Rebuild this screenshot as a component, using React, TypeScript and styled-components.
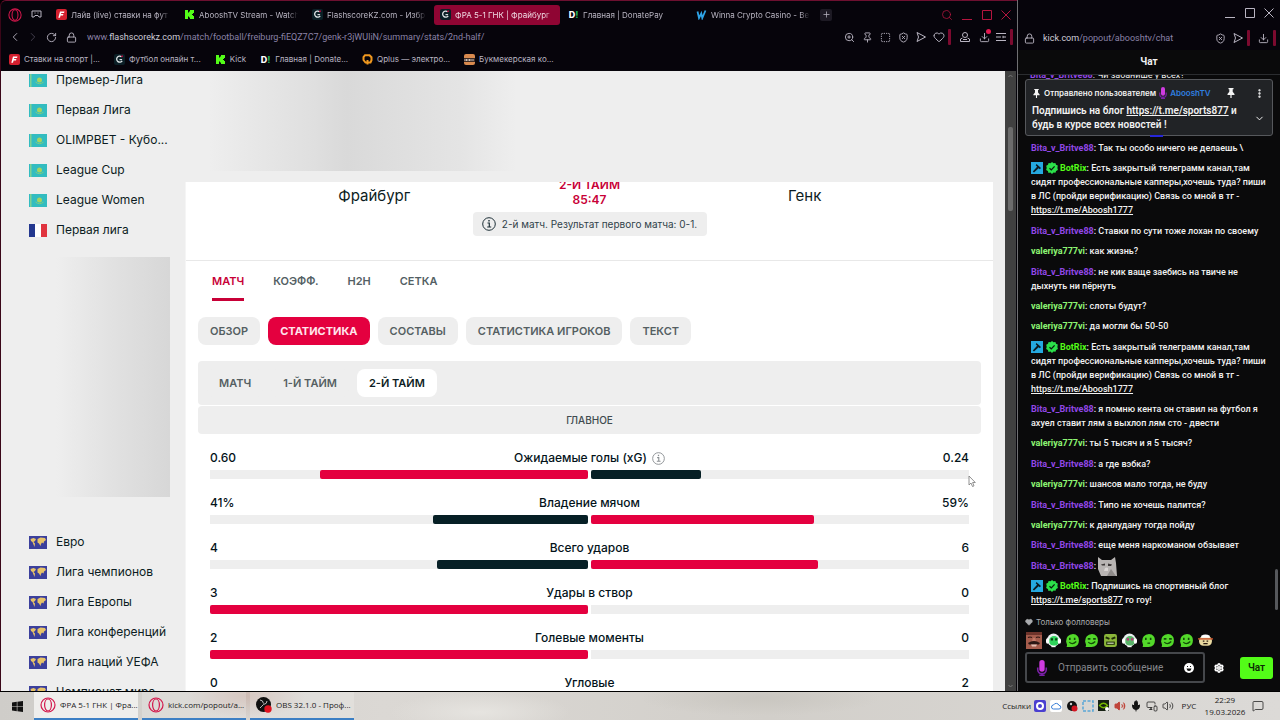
import React from 'react';
import styled, { createGlobalStyle, css } from 'styled-components';
import {
  ChevronLeft, ChevronRight, ChevronDown, RotateCw, Lock, ZoomIn, Pin, SquareDashed, ShieldX,
  Heart, Download, Search, Plus, MoreVertical, Settings, Mic, Volume2, MessageSquare, MonitorSmartphone,
} from 'lucide-react';

const Global = createGlobalStyle`
  * { box-sizing: border-box; }
  body { margin: 0; background: #000; font-family: Inter, "Liberation Sans", sans-serif; }
  button { font: inherit; border: 0; padding: 0; background: none; color: inherit; cursor: pointer; }
  a { color: inherit; text-decoration: none; }
  ul { list-style: none; margin: 0; padding: 0; }
  svg { display: block; flex: none; }
`;

const Desktop = styled.div`
  display: flex;
  flex-direction: column;
  height: 100vh;
  overflow: hidden;
  background: #000;
`;
const Windows = styled.div`
  flex: 1;
  min-height: 0;
  display: flex;
  border-bottom: 1px solid #000;
`;

/* ---------- browser window ---------- */
const Browser = styled.section`
  flex: 1;
  min-width: 0;
  display: flex;
  flex-direction: column;
  background: #06040b;
  border-left: 1px solid #3a0618;
  border-top: 1px solid #6d1030;
  border-top-left-radius: 6px;
  color: #b9b5c2;
`;
const TabBar = styled.div`
  display: flex;
  align-items: center;
  height: 25px;
  padding: 2px 2px 0 7px;
`;
const IconButton = styled.button<{ $w?: number; $color?: string }>`
  flex: none;
  display: flex;
  align-items: center;
  justify-content: center;
  position: relative;
  width: ${(p) => p.$w ?? 18}px;
  height: 20px;
  color: ${(p) => p.$color ?? '#b9b5c2'};
`;
const Tab = styled.button<{ $active?: boolean }>`
  flex: 0 1 126px;
  min-width: 0;
  display: flex;
  align-items: center;
  gap: 4px;
  height: 20px;
  margin-right: 2px;
  padding: 0 6px;
  border-radius: 3px;
  font-size: 8px;
  line-height: 14px;
  ${(p) => p.$active && css`background: #8f0533; color: #f0dbe4;`}
`;
const TabTitle = styled.span`
  flex: 1;
  text-align: left;
  white-space: nowrap;
  overflow: hidden;
  mask-image: linear-gradient(90deg, #000 90%, transparent);
`;
const Spacer = styled.div`
  flex: 1;
`;
const NewTab = styled(IconButton)`
  height: 12px;
  background: #1d1a24;
  border-radius: 2px;
  margin-left: 2px;
`;
const AddressBar = styled.div`
  display: flex;
  align-items: center;
  height: 22px;
  padding: 0 1px 0 5px;
`;
const Url = styled.button`
  font-family: Roboto, sans-serif;
  font-size: 9px;
  line-height: 14px;
  margin-left: 5px;
  color: #8a82a6;
  white-space: nowrap;
  b { font-weight: 400; color: #cfccd8; }
`;
const RedBar = styled.span`
  flex: none;
  width: 3px;
  height: 16px;
  margin-right: 3px;
  border-radius: 1px;
  background: #7c0a2f;
`;
const Dot = styled.span`
  position: absolute;
  top: 2px;
  right: 1px;
  width: 5px;
  height: 5px;
  border-radius: 50%;
  background: #e0184f;
`;
const Bookmarks = styled.nav`
  display: flex;
  align-items: center;
  gap: 14px;
  height: 22px;
  padding: 0 8px;
  font-size: 8px;
  line-height: 14px;
  a { display: flex; align-items: center; gap: 4px; white-space: nowrap; }
`;
const Fav = styled.span`
  flex: none;
  display: inline-flex;
  align-items: center;
  justify-content: center;
  width: 11px;
  height: 11px;
  color: #fff;
  font-size: 9px;
  line-height: 11px;
  font-weight: 800;
  i { font-style: normal; color: #20b15a; }
`;

/* ---------- site ---------- */
const Viewport = styled.div`
  flex: 1;
  min-height: 0;
  display: flex;
  overflow: hidden;
  margin: 1px 1px 0 0;
  background: #eeeeee;
  color: #0c1c22;
`;
const Sidebar = styled.aside`
  flex: none;
  width: 184px;
`;
const LeagueList = styled.ul`
  margin-top: -6px;
`;
const League = styled.li`
  height: 30px;
  padding-left: 28px;
  a { display: flex; align-items: center; gap: 9px; height: 30px; font-size: 12px; line-height: 20px; white-space: nowrap; }
`;
const SideAd = styled.div`
  width: 114px;
  height: 240px;
  margin: 12px 0 36px 55px;
  background: linear-gradient(90deg, #eeeeee, #e0e0e0 55%, #d7d7d7);
`;
const Main = styled.main`
  flex: 1;
  min-width: 0;
  display: flex;
  flex-direction: column;
`;
const TopAd = styled.div`
  flex: none;
  height: 100px;
  margin-bottom: 11px;
  background: linear-gradient(90deg, #eeeeee 3%, #e8e8e8 8%, #dfdfdf 16%, #d9d9d9 20%, #dedede 26%, #e4e4e4 34%, #eeeeee 41%);
`;
const Panel = styled.div`
  flex: 1;
  min-height: 0;
  overflow: hidden;
  background: #fff;
  border-left: 1px solid #f5f5f5;
`;
const Scoreboard = styled.header`
  display: grid;
  grid-template-columns: 1fr 234px 1fr;
  height: 79px;
  border-bottom: 1px solid #e8e8e8;
`;
const Team = styled.div<{ $home?: boolean }>`
  padding-top: 2px;
  font-size: 15px;
  line-height: 24px;
  text-align: center;
  ${(p) => (p.$home ? 'padding-left: 90px;' : 'padding-right: 90px;')}
`;
const MatchState = styled.div`
  display: flex;
  flex-direction: column;
  align-items: center;
  margin-top: -5px;
  color: #c80037;
  font-size: 12px;
  line-height: 15px;
  font-weight: 600;
`;
const InfoNote = styled.div`
  display: flex;
  align-items: center;
  justify-content: center;
  gap: 6px;
  width: 100%;
  height: 24px;
  margin-top: 5px;
  border-radius: 4px;
  background: #eeeeee;
  color: #30424a;
  font-size: 10px;
  line-height: 14px;
  font-weight: 400;
  white-space: nowrap;
`;
const MainNav = styled.nav`
  display: flex;
  gap: 29px;
  padding: 11px 0 0 26px;
  height: 56px;
`;
const MainLink = styled.a<{ $active?: boolean }>`
  height: 29px;
  font-size: 11px;
  line-height: 18px;
  font-weight: 600;
  color: ${(p) => (p.$active ? '#c80037' : '#545f64')};
  border-bottom: 3px solid ${(p) => (p.$active ? '#c80037' : 'transparent')};
`;
const Pills = styled.div`
  display: flex;
  gap: 8px;
  padding-left: 12px;
`;
const Pill = styled.button<{ $tone?: 'red' | 'white' | 'clear' }>`
  height: 28px;
  padding: 0 12px;
  border-radius: 8px;
  font-size: 11px;
  line-height: 16px;
  font-weight: 600;
  white-space: nowrap;
  color: #555f62;
  background: #eeeeee;
  ${(p) => p.$tone === 'red' && css`background: #e4003f; color: #ffe4ec; font-weight: 700;`}
  ${(p) => p.$tone === 'white' && css`background: #fff; color: #0c1c22;`}
`;
const PeriodBox = styled.div`
  display: flex;
  align-items: center;
  gap: 8px;
  height: 44px;
  margin: 16px 12px 1px;
  padding: 0 9px;
  border-radius: 4px;
  background: #eeeeee;
`;
const SectionTitle = styled.h2`
  margin: 0 12px;
  height: 28px;
  border-radius: 4px;
  background: #eeeeee;
  color: #414b50;
  font-size: 10px;
  line-height: 28px;
  font-weight: 500;
  text-align: center;
`;
const StatRow = styled.div`
  padding: 14px 24px 0;
`;
const StatLine = styled.div`
  display: grid;
  grid-template-columns: 1fr auto 1fr;
  align-items: center;
  height: 20px;
  margin-bottom: 2px;
  font-size: 12px;
  line-height: 20px;
  font-weight: 500;
  color: #04131a;
  span:last-child { text-align: right; }
`;
const StatName = styled.div`
  display: flex;
  align-items: center;
  gap: 5px;
`;
const Bars = styled.div`
  display: grid;
  grid-template-columns: 1fr 1fr;
  gap: 3px;
`;
const Track = styled.div<{ $right?: boolean }>`
  display: flex;
  justify-content: ${(p) => (p.$right ? 'flex-start' : 'flex-end')};
  height: 9px;
  background: #eeeeee;
`;
const Fill = styled.div<{ $lead?: boolean }>`
  height: 9px;
  border-radius: 2px;
  background: ${(p) => (p.$lead ? '#e4003f' : '#061f25')};
`;
const Scrollbar = styled.div`
  flex: none;
  width: 11px;
  padding: 3px;
  margin-left: 12px;
  display: flex;
  flex-direction: column;
  background: #404040;
`;
const Thumb = styled.div`
  width: 5px;
  height: 84px;
  margin: 49px 0 auto;
  border-radius: 2px;
  background: #6c6c6c;
`;
const Cursor = styled.svg`
  position: absolute;
  left: 968px;
  top: 475px;
`;

/* ---------- chat window ---------- */
const Chat = styled.section`
  flex: none;
  width: 263px;
  display: flex;
  flex-direction: column;
  background: #0a0a0b;
  border-left: 1px solid #6f6f72;
  color: #f2f2f2;
  font-family: Roboto, sans-serif;
`;
const ChatTitleBar = styled.div`
  display: flex;
  justify-content: flex-end;
  align-items: center;
  height: 26px;
  padding-right: 2px;
  background: #06040b;
`;
const ChatAddress = styled(AddressBar)`
  height: 24px;
  padding: 0 1px 0 2px;
  background: #06040b;
`;
const ChatHeading = styled.h1`
  margin: 0;
  height: 25px;
  font-size: 10px;
  line-height: 24px;
  font-weight: 700;
  text-align: center;
  border-bottom: 1px solid #2b2d30;
`;
const Peek = styled.div`
  height: 4px;
  overflow: hidden;
  padding-left: 12px;
  display: flex;
  align-items: flex-end;
  font-size: 9px;
  line-height: 8px;
  white-space: nowrap;
`;
const Pinned = styled.div`
  position: relative;
  display: flex;
  flex-direction: column;
  margin: 0 7px;
  height: 57px;
  padding: 5px 6px;
  border: 1px solid #56585c;
  border-radius: 3px;
  background: #212326;
  font-weight: 600;
  &::after {
    content: '';
    position: absolute;
    left: 124px;
    bottom: -2px;
    width: 13px;
    height: 2px;
    background: #2626d8;
  }
`;
const PinnedBy = styled.div`
  display: flex;
  align-items: center;
  gap: 3px;
  height: 16px;
  font-family: Inter, sans-serif;
  font-size: 8px;
  line-height: 14px;
  white-space: nowrap;
`;
const PinnedUser = styled.a`
  color: #2f7fe0;
`;
const PinnedBody = styled.div`
  display: flex;
  align-items: center;
  justify-content: space-between;
  margin-top: 3px;
  font-size: 10px;
  line-height: 14px;
  p { margin: 0; white-space: nowrap; }
  a { text-decoration: underline; }
`;
const Messages = styled.ol`
  flex: 1;
  min-height: 0;
  display: flex;
  flex-direction: column;
  justify-content: space-between;
  list-style: none;
  margin: 5px 0 0;
  padding: 0 6px 0 13px;
`;
const Message = styled.li`
  font-size: 9px;
  line-height: 14px;
  font-weight: 500;
  white-space: nowrap;
  a { text-decoration: underline; }
`;
const Nick = styled.b<{ $c: string }>`
  font-weight: 700;
  color: ${(p) => p.$c};
`;
const Badges = styled.span`
  display: inline-flex;
  gap: 3px;
  height: 12px;
  margin-right: 2px;
  vertical-align: -3px;
`;
const Emote = styled.span`
  display: inline-block;
  height: 14px;
  vertical-align: top;
  svg { margin-top: -2px; }
`;
const ChatScroll = styled.div`
  position: absolute;
  right: 2px;
  top: 569px;
  width: 3px;
  height: 41px;
  border-radius: 2px;
  background: #56585c;
`;
const Followers = styled.div`
  display: flex;
  align-items: center;
  gap: 3px;
  margin-top: 8px;
  padding-left: 7px;
  height: 14px;
  color: #a9abae;
  font-family: Inter, sans-serif;
  font-size: 8px;
  line-height: 14px;
`;
const Emotes = styled.div`
  display: flex;
  gap: 3px;
  height: 18px;
  margin-top: 2px;
  padding-left: 8px;
  button { width: 16px; height: 18px; display: flex; align-items: center; justify-content: center; }
`;
const Composer = styled.form`
  display: flex;
  align-items: center;
  margin: 3px 7px 8px;
`;
const InputBox = styled.label`
  flex: 1;
  min-width: 0;
  display: flex;
  align-items: center;
  gap: 10px;
  height: 31px;
  padding: 0 9px;
  border: 2px solid #45474b;
  border-radius: 3px;
  input {
    flex: 1; min-width: 0; border: 0; padding: 0; outline: 0; background: none; color: #fff;
    font: 400 10px/16px Roboto, sans-serif;
  }
  input::placeholder { color: #85878b; opacity: 1; }
`;
const SendButton = styled.button`
  width: 33px;
  height: 22px;
  margin-left: 7px;
  border-radius: 3px;
  background: #53fc18;
  color: #0c2a04;
  font-size: 10px;
  font-weight: 600;
`;

/* ---------- taskbar ---------- */
const Taskbar = styled.footer`
  flex: none;
  display: flex;
  align-items: center;
  height: 28px;
  background:
    radial-gradient(60px 22px at 245px 4px, #cdbab2, transparent),
    radial-gradient(90px 20px at 480px 20px, #e6e4e0, transparent),
    radial-gradient(120px 18px at 760px 6px, #c9c6c0, transparent),
    linear-gradient(90deg, #cfcdc9, #dbd8d4 30%, #d2cfca 60%, #dcdad7);
  color: #1c1c1c;
  font: 400 8px/14px "Open Sans", "Noto Sans", sans-serif;
`;
const Start = styled.button`
  width: 34px;
  height: 28px;
  display: flex;
  align-items: center;
  justify-content: center;
`;
const Task = styled.button<{ $active?: boolean }>`
  display: flex;
  align-items: center;
  gap: 4px;
  width: 104px;
  height: 28px;
  margin-right: 4px;
  padding: 0 6px;
  white-space: nowrap;
  background: ${(p) => (p.$active ? '#efeeec' : 'rgba(255,255,255,0.2)')};
  border-bottom: 2px solid #3c7fc4;
`;
const Tray = styled.div`
  display: flex;
  align-items: center;
  gap: 2px;
  margin-left: auto;
  padding-right: 13px;
`;
const TrayIcon = styled.button<{ $w?: number; $color?: string }>`
  width: ${(p) => p.$w ?? 14}px;
  height: 20px;
  display: flex;
  align-items: center;
  justify-content: center;
  color: ${(p) => p.$color ?? 'inherit'};
`;
const Clock = styled.time`
  width: 44px;
  text-align: center;
  line-height: 12px;
`;

/* ---------- drawings ---------- */
const Opera = ({ s = 14 }: { s?: number }) => (
  <svg width={s} height={s} viewBox="0 0 16 16" fill="none" stroke="#d3174c">
    <circle cx="8" cy="8" r="7" strokeWidth="1.2" />
    <ellipse cx="8" cy="8" rx="3.4" ry="6" strokeWidth="1.2" />
  </svg>
);
const KickLogo = () => (
  <svg width="11" height="11" viewBox="0 0 11 11" fill="#53fc18">
    <path d="M1 1h3v2.500h1v-1h1V1h4v3H9v1H8v1h1v1h1v3H6V8.500H5v-1H4V10H1z" />
  </svg>
);
const FlashLogo = () => (
  <svg width="11" height="11" viewBox="0 0 11 11" fill="none">
    <rect width="11" height="11" rx="2" fill="#0b1f26" />
    <path d="M7.500 2.800 A3 3 0 1 0 8.200 6.800" stroke="#dfe6e8" strokeWidth="1.300" />
    <path d="M5.500 5.600h2.600" stroke="#dfe6e8" strokeWidth="1.100" />
    <path d="M7.500 2.600l1.200-.8" stroke="#e4003f" strokeWidth="1.300" />
  </svg>
);
const FonLogo = () => (
  <svg width="11" height="11" viewBox="0 0 11 11">
    <rect width="11" height="11" rx="2" fill="#d4202f" />
    <path d="M4 2.500h4.500l-.5 1.600H5.300l-.3 1h2.400L7 6.500H4.600L4 8.700H2.300z" fill="#fff" />
  </svg>
);
const QLogo = () => (
  <svg width="11" height="11" viewBox="0 0 11 11" fill="none" stroke="#f0981f" strokeWidth="2">
    <path d="M3 1.200h4.500l2 2v3l-1 2.300h-5l-2-2.500V3z" />
    <path d="M5.500 6v4.500" />
  </svg>
);
const BkLogo = () => (
  <svg width="11" height="11" viewBox="0 0 11 11">
    <rect width="11" height="11" rx="2" fill="#d98a4e" />
    <path d="M0 4h11v4H0z" fill="#3b2a24" />
    <path d="M1 5v2M2.500 5v2M4 5v2M5.500 5v2M7 5v2M9 5v2" stroke="#f4e9df" strokeWidth=".8" />
  </svg>
);
const WinnaLogo = () => (
  <svg width="11" height="11" viewBox="0 0 11 11" fill="none" stroke="#2ea3e6" strokeWidth="1.800">
    <path d="M1.500 2.500L3 9l2.300-4.500L6.300 9 9.500 1.500" />
  </svg>
);
const Donate = () => <Fav>D<i>!</i></Fav>;
const Share = () => (
  <svg width="12" height="12" viewBox="0 0 12 12" fill="none" stroke="currentColor" strokeLinejoin="round">
    <path d="M2 1.500L10.500 6 2 10.500 3.500 6z" />
  </svg>
);
const Profile = () => (
  <svg width="12" height="12" viewBox="0 0 12 12" fill="none" stroke="currentColor">
    <circle cx="6" cy="4" r="2.500" />
    <path d="M3.500 7L1.500 8v2.500h9V8l-2-1M4 8.500h4" />
  </svg>
);
const Sliders = () => (
  <svg width="12" height="12" viewBox="0 0 12 12" fill="none" stroke="currentColor">
    <path d="M1 2.500h10M1 6h5M8 6h3M1 9.500h10M8 4.800v2.400" />
  </svg>
);
const MinimizeIcon = () => <svg width="10" height="10" stroke="currentColor"><path d="M0 9.500h10" /></svg>;
const MaximizeIcon = () => <svg width="10" height="10" fill="none" stroke="currentColor"><path d="M.5 .5h9v9h-9z" /></svg>;
const CloseIcon = () => <svg width="10" height="10" stroke="currentColor"><path d="M.5 .5l9 9M9.500 .5l-9 9" /></svg>;
const Arrow = ({ down }: { down?: boolean }) => (
  <svg width="5" height="4" viewBox="0 0 5 4" fill="none" stroke="#777"><path d={down ? 'M.5 1l2 2 2-2' : 'M.5 3l2-2 2 2'} /></svg>
);
const Kz = () => (
  <svg width="18" height="13" viewBox="0 0 18 13">
    <rect width="18" height="13" fill="#32bcc0" />
    <rect width="1.500" height="13" x="1" fill="#7fcf94" />
    <circle cx="10.500" cy="6" r="2.500" fill="#a5d35e" />
    <path d="M6.500 8q4 3.500 8 0" stroke="#7fcf7c" fill="none" />
  </svg>
);
const Fr = () => (
  <svg width="18" height="13" viewBox="0 0 18 13">
    <rect width="6" height="13" fill="#24388f" />
    <rect x="6" width="6" height="13" fill="#fff" />
    <rect x="12" width="6" height="13" fill="#e0343f" />
  </svg>
);
const World = () => (
  <svg width="18" height="13" viewBox="0 0 18 13">
    <rect width="18" height="13" fill="#3b3f9c" />
    <path d="M1.500 3l3-1 2.500 1-1 2-1.500 1 1.500 1.500L5.500 11 4.500 8.500 3.500 6 2 5zM8.500 3l3-1.500 4.500.5 1 2-2 1.500-.5 2-1.500-1-1 1.500-.5 2-1.500-2.500-1.500-1z" fill="#e8c368" />
  </svg>
);
const Info = ({ c, s = 14 }: { c: string; s?: number }) => (
  <svg width={s} height={s} viewBox="0 0 14 14" fill="none" stroke={c}>
    <circle cx="7" cy="7" r="6.300" />
    <path d="M5.500 6h1.800v4M5.200 10h4" strokeWidth="1.200" />
    <path d="M6.300 3.700h1.400" strokeWidth="1.500" />
  </svg>
);
const PurpleMic = ({ w = 8, h = 12 }: { w?: number; h?: number }) => (
  <svg width={w} height={h} viewBox="0 0 10 15">
    <path d="M1 7v2a4 4 0 0 0 8 0V7" stroke="#7a1fa8" fill="none" strokeWidth="1.500" />
    <rect x="2.500" y="0" width="5" height="11" rx="2.500" fill="#cf3be0" />
    <path d="M5 12v2M2.500 14.300h5" stroke="#7a1fa8" strokeWidth="1.300" />
  </svg>
);
const PinSolid = ({ s = 9 }: { s?: number }) => (
  <svg width={s} height={s} viewBox="0 0 10 10" fill="#f4f4f4">
    <path d="M2.500 0h5v1.200h-.8v2.600L8.500 6v1H5.600v3H4.400V7H1.500V6l1.800-2.200V1.200h-.8z" />
  </svg>
);
const BotBadges = () => (
  <Badges>
    <svg width="12" height="12" viewBox="0 0 12 12">
      <rect width="12" height="12" fill="#25a9e0" />
      <path d="M5.500 2l4.500 4-1.200 1.200-1.200-1L3 10.500 1.800 9.400l4.300-4.600-1.400-1.500z" fill="#0b1a22" />
    </svg>
    <svg width="12" height="12" viewBox="0 0 12 12">
      <path d="M6 0l1.500 1.200L9.400.9l.6 1.900 1.800.8L11.400 6l.5 2-1.800.9-.6 1.900-2-.3L6 12l-1.500-1.400-2 .3-.6-1.900L.1 8l.6-2L.2 3.800 2 2.800l.6-1.900 2 .3z" fill="#2be04a" />
      <path d="M3.500 6.200l1.800 1.700 3.300-3.500" stroke="#0b1a0d" strokeWidth="1.300" fill="none" />
    </svg>
  </Badges>
);
const CatEmote = () => (
  <svg width="19" height="19" viewBox="0 0 19 19">
    <path d="M0 0l4 3h9l4-3 1 6 1 13H3L0 12z" fill="#b8b4b3" />
    <path d="M3 7.500l4-1v2H4zM10 6.500l4 1-1 1.500h-3z" fill="#3d3838" />
    <path d="M7 11q2-1 3 0v3H6z" fill="#dad5d4" />
    <path d="M13 12l5 7H9z" fill="#8e8a89" />
  </svg>
);
const FaceEmote = () => (
  <svg width="16" height="17" viewBox="0 0 16 17">
    <rect width="16" height="17" fill="#a55c4c" />
    <path d="M0 0h16v3H0z" fill="#6e342b" />
    <path d="M2 5.500q2-1 4 0M10 5.500q2-1 4 0" stroke="#2c1512" strokeWidth="1.200" fill="none" />
    <path d="M7 6h2l1 3H6z" fill="#c27866" />
    <path d="M2 11q6-4 12 0l-1 1.500H3z" fill="#2a1714" />
    <path d="M5 12.500h6l-1 2H6z" fill="#e3c0b3" />
  </svg>
);
const Frog = ({ kind }: { kind: number }) => (
  <svg width="15" height="15" viewBox="0 0 14 14">
    {kind === 0 || kind === 4 ? (
      <>
        <circle cx="7" cy="6.500" r="6" fill="#e9eef0" />
        <circle cx="7.500" cy="7.500" r="4.600" fill={kind ? '#59b368' : '#2fd35b'} />
        <rect x="0" y="5" width="3" height="5" rx="1.500" fill="#fff" />
        <rect x="11" y="5" width="3" height="5" rx="1.500" fill="#fff" />
        <path d="M4.500 6h2M8.500 6h2" stroke={kind ? '#c02a7a' : '#0b3a12'} strokeWidth="2" />
        <path d="M5 12.500h4" stroke="#fff" strokeWidth="1.500" />
      </>
    ) : kind === 3 ? (
      <>
        <rect x="1" y="1" width="12" height="12" rx="2" fill="#8bb63a" />
        <path d="M2.500 4l3.500 1.500M11.500 4L8 5.500" stroke="#1c2a08" strokeWidth="1.800" />
        <rect x="3" y="8" width="8" height="3" fill="#1c2a08" />
        <path d="M4 9.500h6" stroke="#e9f3d0" />
      </>
    ) : kind === 8 ? (
      <>
        <rect x="1" y="3" width="12" height="9" rx="4" fill="#e9d9a0" />
        <path d="M0 5.500h14" stroke="#c9502b" strokeWidth="1.300" />
        <path d="M3 2.500q4-2 8 0v2H3z" fill="#fff" />
        <path d="M4.500 7.500h1.500M8 7.500h1.500M5 10h4" stroke="#2a1a10" strokeWidth="1.200" />
      </>
    ) : (
      <>
        <path d="M1 8q0-6.500 6.500-7Q13 1.500 13 7q0 6-6 6H1.500q1-1.500-.5-5z" fill="#53d92a" />
        <path d={kind % 2 ? 'M4.500 4.500v2M9 4.500v2' : 'M3.500 5.500h2.500M8.500 5.500H11'} stroke="#124a08" strokeWidth="1.500" />
        <path d={kind === 5 ? 'M6 9.500h2.500' : 'M4 8.500q3 3 6.500-.5'} stroke="#124a08" strokeWidth="1.200" fill="none" />
      </>
    )}
  </svg>
);

/* ---------- data ---------- */
const tabs = [
  { icon: <FonLogo />, title: 'Лайв (live) ставки на фут' },
  { icon: <KickLogo />, title: 'AbooshTV Stream - Watch' },
  { icon: <FlashLogo />, title: 'FlashscoreKZ.com - Избр' },
  { icon: <FlashLogo />, title: 'ФРА 5-1 ГНК | Фрайбург', active: true },
  { icon: <Donate />, title: 'Главная | DonatePay' },
  { icon: <WinnaLogo />, title: 'Winna Crypto Casino - Be' },
];
const bookmarks = [
  { icon: <FonLogo />, title: 'Ставки на спорт |...' },
  { icon: <FlashLogo />, title: 'Футбол онлайн т...' },
  { icon: <KickLogo />, title: 'Kick' },
  { icon: <Donate />, title: 'Главная | Donate...' },
  { icon: <QLogo />, title: 'Qplus — электро...' },
  { icon: <BkLogo />, title: 'Букмекерская ко...' },
];
const localLeagues = ['Премьер-Лига', 'Первая Лига', 'OLIMPBET - Кубо...', 'League Cup', 'League Women'];
const worldLeagues = ['Евро', 'Лига чемпионов', 'Лига Европы', 'Лига конференций', 'Лига наций УЕФА', 'Чемпионат мира'];
const stats = [
  { name: 'Ожидаемые голы (xG)', home: '0.60', away: '0.24', h: 71, a: 29, info: true },
  { name: 'Владение мячом', home: '41%', away: '59%', h: 41, a: 59 },
  { name: 'Всего ударов', home: '4', away: '6', h: 40, a: 60 },
  { name: 'Удары в створ', home: '3', away: '0', h: 100, a: 0 },
  { name: 'Голевые моменты', home: '2', away: '0', h: 100, a: 0 },
  { name: 'Угловые', home: '0', away: '2', h: 0, a: 100 },
];

const Bita = () => <><Nick $c="#9147e6">Bita_v_Britve88</Nick>: </>;
const Val = () => <><Nick $c="#8df573">valeriya777vi</Nick>: </>;
const Bot = () => <><BotBadges /><Nick $c="#53fc18">BotRix</Nick>: </>;
const promo = (
  <><Bot />Есть закрытый телеграмм канал,там<br />сидят профессиональные капперы,хочешь туда? пиши<br />в ЛС (пройди верификацию) Связь со мной в тг -<br /><a href="#aboosh">https://t.me/Aboosh1777</a></>
);
const messages: React.ReactNode[] = [
  <><Bita />Так ты особо ничего не делаешь \</>,
  promo,
  <><Bita />Ставки по сути тоже лохан по своему</>,
  <><Val />как жизнь?</>,
  <><Bita />не кик ваще заебись на твиче не<br />дыхнуть ни пёрнуть</>,
  <><Val />слоты будут?</>,
  <><Val />да могли бы 50-50</>,
  promo,
  <><Bita />я помню кента он ставил на футбол я<br />ахуел ставит лям а выхлоп лям сто - двести</>,
  <><Val />ты 5 тысяч и я 5 тысяч?</>,
  <><Bita />а где вэбка?</>,
  <><Val />шансов мало тогда, не буду</>,
  <><Bita />Типо не хочешь палится?</>,
  <><Val />к данлудану тогда пойду</>,
  <><Bita />еще меня наркоманом обзывает</>,
  <><Bita /><Emote><CatEmote /></Emote></>,
  <><Bot />Подпишись на спортивный блог<br /><a href="#sports">https://t.me/sports877</a> го гоу!</>,
];

export default function App() {
  return (
    <Desktop>
      <Global />
      <Windows>
        <Browser>
          <TabBar>
            <IconButton $w={14} aria-label="Opera"><Opera /></IconButton>
            <IconButton $w={28} aria-label="Workspaces">
              <svg width="11" height="9" viewBox="0 0 11 9" fill="none" stroke="currentColor">
                <path d="M1 1h9v6H8L7 5.500H4L3 7H1z" /><path d="M3.500 3h1M6.500 3h1" />
              </svg>
            </IconButton>
            {tabs.map((t) => (
              <Tab key={t.title} $active={t.active}>{t.icon}<TabTitle>{t.title}</TabTitle></Tab>
            ))}
            <NewTab $w={12} aria-label="New tab"><Plus size={9} /></NewTab>
            <Spacer />
            <IconButton $w={20} $color="#b5153f" aria-label="Search tabs"><Search size={12} strokeWidth={1.5} /></IconButton>
            <IconButton $w={20} $color="#b5153f" aria-label="Minimize"><MinimizeIcon /></IconButton>
            <IconButton $w={19} $color="#b5153f" aria-label="Maximize"><MaximizeIcon /></IconButton>
            <IconButton $w={19} $color="#b5153f" aria-label="Close"><CloseIcon /></IconButton>
          </TabBar>
          <AddressBar>
            <IconButton aria-label="Back"><ChevronLeft size={14} strokeWidth={1.5} /></IconButton>
            <IconButton $color="#4a4656" aria-label="Forward"><ChevronRight size={14} strokeWidth={1.5} /></IconButton>
            <IconButton aria-label="Reload"><RotateCw size={11} /></IconButton>
            <IconButton $w={22} aria-label="Site info"><Lock size={11} /></IconButton>
            <Url aria-label="Edit address">www.<b>flashscorekz.com</b>/match/football/freiburg-fiEQZ7C7/genk-r3jWUliN/summary/stats/2nd-half/</Url>
            <Spacer />
            <IconButton aria-label="Zoom"><ZoomIn size={11} /></IconButton>
            <IconButton aria-label="Pin"><Pin size={11} /></IconButton>
            <IconButton aria-label="Snapshot"><SquareDashed size={11} /></IconButton>
            <IconButton aria-label="Ad blocker"><ShieldX size={11} /></IconButton>
            <IconButton aria-label="Share"><Share /></IconButton>
            <IconButton aria-label="Favourite"><Heart size={12} /></IconButton>
            <RedBar />
            <IconButton $w={22} aria-label="Profile"><Profile /></IconButton>
            <IconButton $w={16} aria-label="Downloads"><Download size={11} /><Dot /></IconButton>
            <IconButton aria-label="Easy setup"><Sliders /></IconButton>
            <RedBar />
          </AddressBar>
          <Bookmarks>
            {bookmarks.map((b) => <a key={b.title} href="#bookmark">{b.icon}{b.title}</a>)}
          </Bookmarks>
          <Viewport>
            <Sidebar>
              <LeagueList>
                {localLeagues.map((l) => <League key={l}><a href="#league"><Kz />{l}</a></League>)}
                <League><a href="#league"><Fr />Первая лига</a></League>
              </LeagueList>
              <SideAd />
              <LeagueList>
                {worldLeagues.map((l) => <League key={l}><a href="#league"><World />{l}</a></League>)}
              </LeagueList>
            </Sidebar>
            <Main>
              <TopAd />
              <Panel>
                <Scoreboard>
                  <Team $home>Фрайбург</Team>
                  <MatchState>
                    <span>2-Й ТАЙМ</span>
                    <span>85:47</span>
                    <InfoNote><Info c="#1d2f37" />2-й матч. Результат первого матча: 0-1.</InfoNote>
                  </MatchState>
                  <Team>Генк</Team>
                </Scoreboard>
                <MainNav>
                  <MainLink href="#match" $active>МАТЧ</MainLink>
                  <MainLink href="#odds">КОЭФФ.</MainLink>
                  <MainLink href="#h2h">H2H</MainLink>
                  <MainLink href="#draw">СЕТКА</MainLink>
                </MainNav>
                <Pills>
                  <Pill>ОБЗОР</Pill>
                  <Pill $tone="red">СТАТИСТИКА</Pill>
                  <Pill>СОСТАВЫ</Pill>
                  <Pill>СТАТИСТИКА ИГРОКОВ</Pill>
                  <Pill>ТЕКСТ</Pill>
                </Pills>
                <PeriodBox>
                  <Pill $tone="clear">МАТЧ</Pill>
                  <Pill $tone="clear">1-Й ТАЙМ</Pill>
                  <Pill $tone="white">2-Й ТАЙМ</Pill>
                </PeriodBox>
                <SectionTitle>ГЛАВНОЕ</SectionTitle>
                {stats.map((s) => (
                  <StatRow key={s.name}>
                    <StatLine>
                      <span>{s.home}</span>
                      <StatName>{s.name}{s.info && <Info c="#8a8f92" s={13} />}</StatName>
                      <span>{s.away}</span>
                    </StatLine>
                    <Bars>
                      <Track><Fill $lead={s.h > s.a} style={{ width: `${s.h}%` }} /></Track>
                      <Track $right><Fill $lead={s.a > s.h} style={{ width: `${s.a}%` }} /></Track>
                    </Bars>
                  </StatRow>
                ))}
              </Panel>
            </Main>
            <Scrollbar><Arrow /><Thumb /><Arrow down /></Scrollbar>
          </Viewport>
        </Browser>

        <Chat>
          <ChatTitleBar>
            <IconButton $w={20} aria-label="Minimize"><MinimizeIcon /></IconButton>
            <IconButton $w={19} aria-label="Maximize"><MaximizeIcon /></IconButton>
            <IconButton $w={19} aria-label="Close"><CloseIcon /></IconButton>
          </ChatTitleBar>
          <ChatAddress>
            <IconButton aria-label="Site info"><Lock size={11} /></IconButton>
            <Url aria-label="Edit address"><b>kick.com</b>/popout/abooshtv/chat</Url>
            <Spacer />
            <IconButton aria-label="Ad blocker"><ShieldX size={11} /></IconButton>
            <IconButton aria-label="Share"><Share /></IconButton>
            <RedBar />
            <IconButton $w={20} aria-label="Downloads"><Download size={11} /></IconButton>
            <RedBar />
          </ChatAddress>
          <ChatHeading>Чат</ChatHeading>
          <Peek><span><Bita />Чи забанише у всех?</span></Peek>
          <Pinned>
            <PinnedBy>
              <PinSolid />Отправлено пользователем<PurpleMic /><PinnedUser href="#user">AbooshTV</PinnedUser>
              <Spacer />
              <IconButton $w={14} aria-label="Unpin"><PinSolid s={10} /></IconButton>
              <Spacer />
              <IconButton $w={14} $color="#fff" aria-label="More"><MoreVertical size={11} strokeWidth={3} /></IconButton>
            </PinnedBy>
            <PinnedBody>
              <p>Подпишись на блог <a href="#sports">https://t.me/sports877</a> и<br />будь в курсе всех новостей !</p>
              <IconButton $w={14} $color="#fff" aria-label="Collapse"><ChevronDown size={11} /></IconButton>
            </PinnedBody>
          </Pinned>
          <Messages>
            {messages.map((m, i) => <Message key={i}>{m}</Message>)}
          </Messages>
          <Followers><Heart size={8} fill="currentColor" />Только фолловеры</Followers>
          <Emotes>
            <button aria-label="Emote"><FaceEmote /></button>
            {[0, 1, 2, 3, 4, 5, 6, 7, 8].map((k) => <button key={k} aria-label="Emote"><Frog kind={k} /></button>)}
          </Emotes>
          <Composer>
            <InputBox>
              <PurpleMic w={12} h={16} />
              <input placeholder="Отправить сообщение" aria-label="Сообщение" />
              <svg width="10" height="10" viewBox="0 0 10 10"><circle cx="5" cy="5" r="5" fill="#fff" /><path d="M2.500 5.500h5q-.5 2.500-2.500 2.500T2.500 5.500zM3 3h1v1H3zM6 3h1v1H6z" fill="#111" /></svg>
            </InputBox>
            <IconButton $w={28} type="button" $color="#fff" aria-label="Settings"><Settings size={10} strokeWidth={4} /></IconButton>
            <SendButton type="button">Чат</SendButton>
          </Composer>
          <ChatScroll />
        </Chat>
      </Windows>

      <Taskbar>
        <Start aria-label="Start">
          <svg width="11" height="11" viewBox="0 0 11 11" fill="#111"><path d="M0 1.500L4.800 .8v4.400H0zM5.400 .7L11 0v5.200H5.400zM0 5.800h4.800v4.400L0 9.500zM5.400 5.800H11V11l-5.600-.8z" /></svg>
        </Start>
        <Task $active><Opera s={16} />ФРА 5-1 ГНК | Фра...</Task>
        <Task><Opera s={16} />kick.com/popout/a...</Task>
        <Task>
          <svg width="16" height="16" viewBox="0 0 16 16"><circle cx="7.500" cy="7.500" r="7.500" fill="#111" /><path d="M4 3q3 0 3.500 3.500M11 4q0 3-3.500 3.500M4 11q2-2 3.500-3.500" stroke="#bbb" fill="none" /><circle cx="12" cy="12" r="3.700" fill="#e0121f" /></svg>
          OBS 32.1.0 - Проф...
        </Task>
        <Tray>
          <span>Ссылки</span>
          <TrayIcon aria-label="Recorder"><svg width="12" height="12" viewBox="0 0 12 12"><rect width="12" height="12" rx="2" fill="#4a3fd0" /><circle cx="6" cy="6" r="4" fill="#fff" /><circle cx="6" cy="6" r="2" fill="#4a3fd0" /></svg></TrayIcon>
          <TrayIcon aria-label="Cloud"><svg width="12" height="12" viewBox="0 0 12 12"><rect width="12" height="12" rx="2" fill="#fff" /><path d="M3.500 9h5.500a1.800 1.800 0 0 0 0-3.600A3 3 0 0 0 3.500 5a2 2 0 0 0 0 4z" fill="none" stroke="#3a7fd8" /></svg></TrayIcon>
          <TrayIcon aria-label="OBS"><svg width="12" height="12" viewBox="0 0 12 12"><circle cx="6" cy="6" r="5" fill="#111" /><circle cx="5" cy="4" r="1.200" fill="#ccc" /><circle cx="8.500" cy="8.500" r="3" fill="#d41521" /></svg></TrayIcon>
          <TrayIcon aria-label="Capture"><svg width="12" height="12" viewBox="0 0 12 12" fill="none" stroke="#5aa7d6" strokeDasharray="3 1.500" strokeWidth="1.500"><rect x="1" y="1" width="10" height="10" /></svg></TrayIcon>
          <TrayIcon aria-label="Graphics"><svg width="12" height="12" viewBox="0 0 12 12"><rect width="11" height="11" fill="#162012" /><path d="M1.500 5.500q4-4.500 8 0-4 4.500-8 0z" fill="none" stroke="#76b900" strokeWidth="1.300" /><circle cx="9" cy="9" r="2" fill="#fff" /></svg></TrayIcon>
          <TrayIcon aria-label="Sound device" $color="#c0453a"><Volume2 size={12} fill="currentColor" /></TrayIcon>
          <TrayIcon aria-label="Microphone"><Mic size={12} fill="#111" /></TrayIcon>
          <TrayIcon aria-label="Network"><MonitorSmartphone size={12} strokeWidth={1.5} /></TrayIcon>
          <TrayIcon aria-label="Volume"><Volume2 size={12} strokeWidth={1.5} /></TrayIcon>
          <TrayIcon $w={24} aria-label="Language">РУС</TrayIcon>
          <Clock>22:29<br />19.03.2026</Clock>
          <TrayIcon $w={18} aria-label="Notifications"><MessageSquare size={12} strokeWidth={1.5} /></TrayIcon>
        </Tray>
      </Taskbar>
      <Cursor width="8" height="13" viewBox="0 0 8 13" fill="#fff" stroke="#777" strokeWidth=".8">
        <path d="M1 1v9l2-2 1.500 3.500 1.500-.6L4.600 7.500H7.300z" />
      </Cursor>
    </Desktop>
  );
}
